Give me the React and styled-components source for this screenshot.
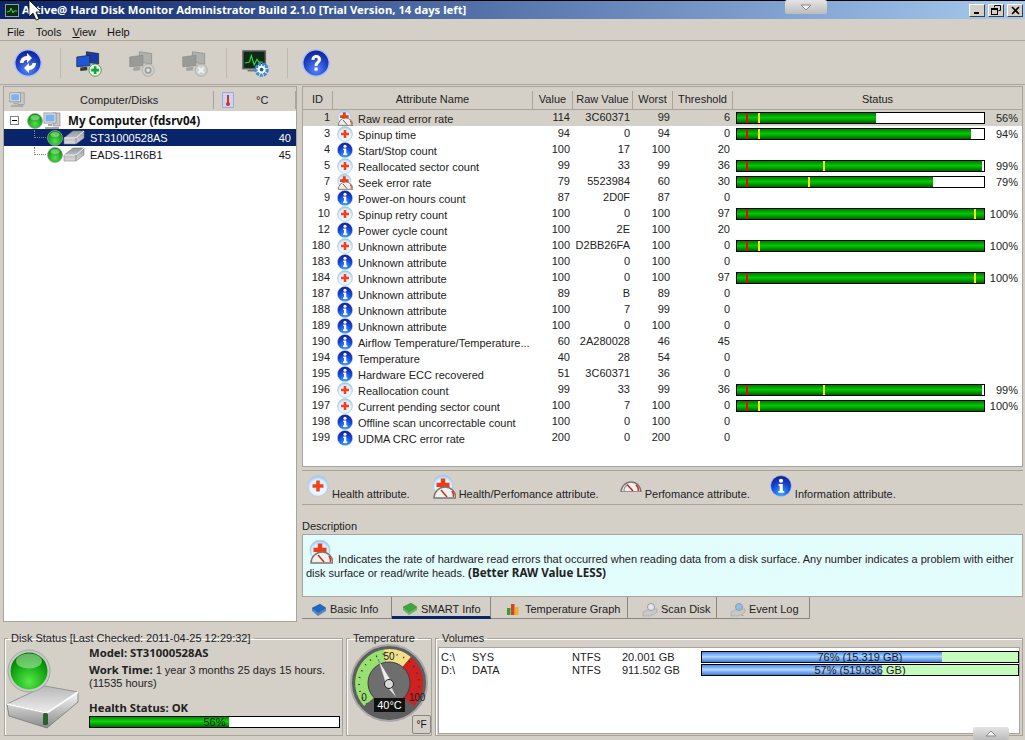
import React from 'react'
import styled, { createGlobalStyle } from 'styled-components'

const GlobalStyle = createGlobalStyle`
  html, body {
    margin: 0;
    padding: 0;
    background: #d4d0c8;
  }
  * { box-sizing: border-box; }
`

const Window = styled.div`
  position: relative;
  width: 1025px;
  height: 740px;
  overflow: hidden;
  display: flex;
  flex-direction: column;
  background: #d4d0c8;
  color: #111;
  font-family: "Liberation Sans", sans-serif;
  font-size: 11px;
  line-height: 16px;
`
const TitleBar = styled.div`
  height: 19px;
  display: flex;
  align-items: center;
  padding: 0 2px 0 5px;
  gap: 3px;
  background: linear-gradient(90deg, #0a246a 0%, #a6caf0 100%);
  border-top: 1px solid #000;
`
const TitleText = styled.div`
  flex: 1;
  color: #fff;
  font-family: "Noto Sans", sans-serif;
  font-weight: bold;
  font-size: 11.3px;
  white-space: nowrap;
`
const WinButton = styled.div`
  width: 16px;
  height: 13px;
  background: #d4d0c8;
  border: 1px solid;
  border-color: #fff #404040 #404040 #fff;
  display: flex;
  align-items: center;
  justify-content: center;
`
const MenuBar = styled.div`
  height: 22px;
  display: flex;
  align-items: center;
  padding-left: 7px;
  gap: 11px;
  font-size: 11px;
  padding-top: 4px;
  border-bottom: 1px solid #aaa69c;
`
const Underlined = styled.span`
  text-decoration: underline;
`
const ToolBar = styled.div`
  height: 44px;
  display: flex;
  align-items: center;
  padding: 1px 0 0 14px;
  border-bottom: 1px solid #aaa69c;
`
const ToolIcon = styled.div`
  width: 28px;
  height: 28px;
  margin-right: ${(p) => p.$gap || 0}px;
  display: flex;
`
const ToolSep = styled.div`
  width: 1px;
  height: 30px;
  background: #bdb9b0;
  margin-right: ${(p) => p.$gap}px;
`
const Main = styled.div`
  height: 537px;
  display: flex;
  padding: 1px 2px 0 3px;
  gap: 5px;
`
const LeftPanel = styled.div`
  width: 294px;
  border: 1px solid #a8a49b;
  background: #fff;
`
const TreeHeader = styled.div`
  height: 24px;
  background: #d4d0c8;
  display: grid;
  grid-template-columns: 210px 1fr;
  align-items: end;
  padding-bottom: 2px;
`
const TreeHeadCell = styled.div`
  height: 18px;
  display: flex;
  align-items: center;
  border-right: 1px solid #a8a49b;
  padding-left: ${(p) => p.$pad || 0}px;
  color: #222;
`
const TreeHeadText = styled.span`
  margin-left: ${(p) => p.$left}px;
`
const TreeRow = styled.div`
  height: 17px;
  display: flex;
  align-items: center;
  padding-left: ${(p) => p.$indent}px;
  padding-right: 5px;
  margin-top: ${(p) => p.$top || 0}px;
  background: ${(p) => (p.$active ? '#0a246a' : 'transparent')};
  color: ${(p) => (p.$active ? '#fff' : '#111')};
`
const TreeLabel = styled.div`
  flex: 1;
  margin-left: ${(p) => (p.$bold ? 7 : 5)}px;
  font-weight: ${(p) => (p.$bold ? 'bold' : 'normal')};
  font-size: ${(p) => (p.$bold ? '11.6px' : '11px')};
  font-family: ${(p) => (p.$bold ? '"Noto Sans", sans-serif' : 'inherit')};
`
const TreeBox = styled.div`
  width: 9px;
  height: 9px;
  border: 1px solid #808080;
  margin-right: 8px;
  display: flex;
  align-items: center;
  justify-content: center;
  &::after {
    content: '';
    width: 5px;
    height: 1px;
    background: #000;
  }
`
const Dotted = styled.div`
  width: 12px;
  height: 8px;
  margin-top: -8px;
  border-left: 1px dotted #808080;
  border-bottom: 1px dotted #808080;
  margin-right: 1px;
`
const RightPanel = styled.div`
  width: 721px;
  display: flex;
  flex-direction: column;
`
const TableFrame = styled.div`
  height: 381px;
  border: 1px solid #a8a49b;
  background: #fff;
`
const COLS = '30px 200px 40px 60px 40px 60px 1fr'
const HeadRow = styled.div`
  height: 23px;
  display: grid;
  grid-template-columns: ${COLS};
  align-items: end;
  background: #d4d0c8;
  border-bottom: 1px solid #a8a49b;
`
const HeadCell = styled.div`
  height: 18px;
  text-align: center;
  border-right: ${(p) => (p.$last ? 'none' : '1px solid #a8a49b')};
  color: #222;
`
const DataRow = styled.div`
  height: 16px;
  display: grid;
  grid-template-columns: ${COLS};
  align-items: center;
  background: ${(p) => (p.$active ? '#d4d0c8' : '#fff')};
  white-space: nowrap;
`
const NumCell = styled.div`
  text-align: right;
  padding: 0 3px 1px 0;
  line-height: 15px;
  color: #222;
`
const NameCell = styled.div`
  display: flex;
  align-items: center;
  gap: 5px;
  padding-left: 4px;
  color: #222;
  overflow: hidden;
  & > svg { flex: none; }
`
const NameText = styled.span`
  padding-top: 2px;
`
const StatusCell = styled.div`
  display: flex;
  align-items: center;
  padding-left: 3px;
`
const Bar = styled.div`
  position: relative;
  width: 249px;
  height: 12px;
  border: 1px solid #000;
  background: #fff;
  overflow: hidden;
`
const BarFill = styled.div`
  height: 100%;
  background: linear-gradient(180deg, #007a00 0%, #00c800 45%, #00a000 70%, #005c00 100%);
`
const Mark = styled.div`
  position: absolute;
  top: 0;
  bottom: 0;
  width: 2px;
  background: ${(p) => p.$color};
`
const Pct = styled.div`
  width: 33px;
  text-align: right;
  color: #222;
`
const Legend = styled.div`
  height: 35px;
  margin-top: 3px;
  display: flex;
  align-items: center;
  padding: 0 0 0 5px;
  border-top: 1px solid #a8a49b;
  border-bottom: 1px solid #a8a49b;
  color: #222;
`
const LegendItem = styled.div`
  display: flex;
  align-items: flex-start;
  margin-right: ${(p) => p.$gap || 0}px;
  gap: 3px;
  & > svg { margin-top: ${(p) => p.$iconTop || 0}px; }
  & > span { margin-top: 12px; line-height: 14px; }
`
const DescLabel = styled.div`
  margin-top: 13px;
  height: 16px;
  color: #222;
`
const DescBox = styled.div`
  height: 63px;
  border: 1px solid #a8a49b;
  background: #e3fdfd;
  padding: 18px 8px 0 3px;
  color: #222;
  line-height: 13px;
`
const DescText = styled.div`
  text-indent: 32px;
`
const DescFlowIcon = styled.span`
  position: absolute;
  margin: -13px 0 0 3px;
`
const DescBold = styled.b`
  display: inline-block;
  text-indent: 0;
  font-family: "Noto Sans", sans-serif;
  font-size: 11.6px;
  line-height: 13px;
`
const Tabs = styled.div`
  display: flex;
  height: 22px;
`
const Tab = styled.div`
  width: ${(p) => p.$w}px;
  display: flex;
  align-items: center;
  gap: ${(p) => p.$gap}px;
  padding: ${(p) => (p.$active ? 4 : 3)}px 0 0 ${(p) => p.$left}px;
  border-right: 1px solid #8a867e;
  border-bottom: ${(p) => (p.$active ? '3px solid #0a246a' : '1px solid #8a867e')};
  color: #222;
`
const Bottom = styled.div`
  flex: 1;
  display: flex;
  gap: 3px;
  padding: 10px 2px 0 4px;
`
const Group = styled.fieldset`
  margin: 0;
  padding: 0;
  min-width: 0;
  width: ${(p) => p.$w}px;
  ${(p) => p.$grow && 'flex: 1;'}
  height: 104px;
  border: 1px solid #a8a49b;
  box-shadow: inset 1px 1px 0 #fff;
  display: flow-root;
`
const GroupTitle = styled.legend`
  padding: 0 3px;
  margin-left: 3px;
  font-size: 11px;
  line-height: 12px;
  color: #222;
`
const StatusBody = styled.div`
  display: flex;
  height: 90px;
`
const BigDisk = styled.div`
  width: 84px;
  flex: none;
`
const StatusInfo = styled.div`
  flex: 1;
  padding-top: 2px;
  color: #222;
  font-size: 11px;
  line-height: 13px;
`
const B = styled.b`
  font-family: "Noto Sans", sans-serif;
  font-size: 11.3px;
`
const InfoLine = styled.div`
  margin-bottom: ${(p) => p.$mb || 0}px;
`
const HealthBar = styled.div`
  position: relative;
  width: 251px;
  height: 12px;
  border: 1px solid #000;
  background: #fff;
  margin-top: 1px;
`
const HealthFill = styled.div`
  height: 100%;
  background: linear-gradient(180deg, #009000 0%, #10d010 45%, #00a800 70%, #006800 100%);
`
const BarText = styled.div`
  position: absolute;
  inset: 0;
  text-align: center;
  line-height: 10px;
  font-size: 11px;
  color: #1a1a1a;
`
const GaugeWrap = styled.div`
  position: relative;
  width: 78px;
  height: 78px;
  margin: 0 0 0 3px;
`
const FButton = styled.div`
  position: absolute;
  right: -3px;
  bottom: -12px;
  width: 19px;
  height: 19px;
  background: #d4d0c8;
  border: 1px solid #8a867e;
  border-radius: 2px;
  text-align: center;
  font-size: 10px;
  line-height: 17px;
`
const VolumeBox = styled.div`
  height: 87px;
  margin: 3px 2px 0;
  background: #fff;
  border: 1px solid #a8a49b;
  padding-top: 1px;
`
const VolumeRow = styled.div`
  height: 13px;
  display: grid;
  grid-template-columns: 31px 100px 50px 79px 318px;
  align-items: center;
  padding-left: 2px;
  color: #222;
  font-size: 11px;
`
const VolumeBar = styled.div`
  position: relative;
  height: 12px;
  border: 1px solid #000;
  background: #c6fbbe;
`
const VolumeFill = styled.div`
  height: 100%;
  background: linear-gradient(180deg, #3f8cf0 0%, #b4d4fa 45%, #7cb0f2 70%, #3a7ee0 100%);
`
const PullTab = styled.div`
  position: absolute;
  top: ${(p) => p.$top}px;
  left: ${(p) => p.$left}px;
  width: ${(p) => p.$w}px;
  height: ${(p) => p.$h}px;
  background: linear-gradient(180deg, #e4e4e4, #bcbcbc);
  border-radius: 2px;
  display: flex;
  align-items: center;
  justify-content: center;
`
const Cursor = styled.svg`
  position: absolute;
  top: 0;
  left: 28px;
`
const HiddenDefs = styled.svg`
  position: absolute;
`

const SharedDefs = () => (
  <HiddenDefs width="0" height="0">
    <defs>
      <radialGradient id="healthGlass" cx="50%" cy="60%" r="60%">
        <stop offset="0%" stopColor="#ffffff" />
        <stop offset="65%" stopColor="#e4f0fa" />
        <stop offset="100%" stopColor="#8cc0ec" />
      </radialGradient>
      <radialGradient id="infoGlass" cx="50%" cy="85%" r="85%">
        <stop offset="0%" stopColor="#38a8ff" />
        <stop offset="55%" stopColor="#1848d8" />
        <stop offset="100%" stopColor="#101c88" />
      </radialGradient>
      <radialGradient id="blueball" cx="50%" cy="75%" r="75%">
        <stop offset="0%" stopColor="#5c88f8" />
        <stop offset="60%" stopColor="#2040c8" />
        <stop offset="100%" stopColor="#101c88" />
      </radialGradient>
      <radialGradient id="ball" cx="50%" cy="70%" r="65%">
        <stop offset="0%" stopColor="#52e052" />
        <stop offset="100%" stopColor="#078a07" />
      </radialGradient>
      <radialGradient id="bigball" cx="50%" cy="78%" r="75%">
        <stop offset="0%" stopColor="#58e848" />
        <stop offset="65%" stopColor="#10a810" />
        <stop offset="100%" stopColor="#067006" />
      </radialGradient>
      <linearGradient id="caseTop" x1="0" y1="0" x2="0" y2="1">
        <stop offset="0%" stopColor="#b8b8b8" />
        <stop offset="100%" stopColor="#eeeeee" />
      </linearGradient>
      <linearGradient id="caseFront" x1="0" y1="0" x2="0" y2="1">
        <stop offset="0%" stopColor="#f8f8f8" />
        <stop offset="100%" stopColor="#8a8a8a" />
      </linearGradient>
      <linearGradient id="tinyDisk" x1="0" y1="0" x2="0" y2="1">
        <stop offset="0%" stopColor="#9298a4" />
        <stop offset="100%" stopColor="#dcdcdc" />
      </linearGradient>
    </defs>
  </HiddenDefs>
)

const HealthIcon = ({ size = 16 }) => (
  <svg width={size} height={size} viewBox="0 0 16 16">
    <circle cx="8" cy="8" r="7.500" fill="url(#healthGlass)" stroke="#a8cdec" strokeWidth=".6" />
    <path d="M6.700 4h2.600v2.700H12v2.600H9.300V12H6.700V9.300H4V6.700h2.700z" fill="#f2421a" />
  </svg>
)
const InfoIcon = ({ size = 16 }) => (
  <svg width={size} height={size} viewBox="0 0 16 16">
    <circle cx="8" cy="8" r="7.600" fill="url(#infoGlass)" stroke="#b0c8f0" strokeWidth=".5" />
    <circle cx="8" cy="4.200" r="1.500" fill="#fff" />
    <path d="M6.200 6.600h3.100v5h1v1.300H6v-1.300h1V7.900h-.8z" fill="#fff" />
  </svg>
)
const PerfIcon = ({ size = 22 }) => (
  <svg width={size} height={size * 0.68} viewBox="0 0 22 15">
    <path d="M1 14a10 10 0 0 1 20 0z" fill="#f2f0ec" stroke="#777" strokeWidth="1.400" />
    <path d="M4 13a7 7 0 0 1 3-6" fill="none" stroke="#999" strokeWidth="1.200" />
    <path d="M16 7a7 7 0 0 1 2.400 6" fill="none" stroke="#d83020" strokeWidth="1.600" />
    <path d="M13 13L7 6.500" stroke="#b03020" strokeWidth="1.500" />
  </svg>
)
const HealthPerfIcon = ({ size = 16 }) => (
  <svg width={size} height={size} viewBox="0 0 24 24">
    <circle cx="11" cy="10" r="10" fill="url(#healthGlass)" stroke="#a8cdec" strokeWidth=".8" />
    <path d="M8.800 3.500h4.400v4.300h4.300v4.200h-4.300v3H8.800v-3H4.500V7.800h4.300z" fill="#f03a14" />
    <path d="M2 23a11 11 0 0 1 22 0z" fill="#f2f0ec" stroke="#777" strokeWidth="1.400" />
    <path d="M15 22L9 15" stroke="#b03020" strokeWidth="1.400" />
    <path d="M20 16a8 8 0 0 1 1.500 6" fill="none" stroke="#d83020" strokeWidth="1.600" />
  </svg>
)
const rowIcons = { h: HealthIcon, i: InfoIcon, p: HealthPerfIcon }

const GreenBall = ({ size = 16 }) => (
  <svg width={size} height={size} viewBox="0 0 16 16">
    <circle cx="8" cy="8" r="7.500" fill="url(#ball)" stroke="#9aa89a" strokeWidth=".8" />
    <ellipse cx="8" cy="4.500" rx="4.500" ry="2.500" fill="#a0e8a0" opacity=".6" />
  </svg>
)
const DiskIcon = () => (
  <svg width="22" height="16" viewBox="0 0 22 16">
    <path d="M1 8L10 1h11v7l-8 6H1z" fill="url(#tinyDisk)" stroke="#808080" strokeWidth=".6" />
    <path d="M1 8h12l8-7" fill="none" stroke="#f0f0f0" strokeWidth="1" />
    <path d="M13 8v6" stroke="#808080" strokeWidth=".8" />
  </svg>
)
const ComputerIcon = ({ size = 18 }) => (
  <svg width={size} height={size} viewBox="0 0 18 18">
    <rect x="10" y="1" width="7" height="13" fill="#c8c8c8" stroke="#808080" strokeWidth=".6" />
    <rect x="1" y="1" width="12" height="10" fill="#e8eef8" stroke="#808080" strokeWidth=".8" />
    <rect x="2.500" y="2.500" width="9" height="7" fill="#7fb2ec" />
    <path d="M5 12h4v2H5zM2 15h14v2H2z" fill="#a8a8a8" />
  </svg>
)

const RefreshIcon = () => (
  <svg width="28" height="28" viewBox="0 0 28 28">
    <circle cx="14" cy="14" r="13.200" fill="url(#blueball)" stroke="#a8c4f0" strokeWidth="1.400" />
    <path d="M6 14c0-4 3-7 7-7V4l5 5-5 5v-3c-2 0-3.500 1.300-3.500 3z" fill="#fff" />
    <path d="M22 14c0 4-3 7-7 7v3l-5-5 5-5v3c2 0 3.500-1.300 3.500-3z" fill="#fff" />
  </svg>
)
const MonitorsIcon = ({ gray, badge }) => {
  const front = gray ? '#9a9a96' : '#1e56d8'
  const back = gray ? '#b0b0ac' : '#1a3aa8'
  return (
    <svg width="32" height="30" viewBox="0 0 32 30">
      <path d="M13 1l14 2v12l-14-2z" fill={back} stroke={gray ? '#8a8a86' : '#222'} strokeWidth=".8" />
      <path d="M2 7l15-2v12L2 18z" fill={front} stroke={gray ? '#8a8a86' : '#222'} strokeWidth=".8" />
      <path d="M6 19l8-1v4l-8 1z" fill={gray ? '#a4a4a0' : '#303848'} />
      <circle cx="23" cy="22" r="7" fill={badge === 'add' ? '#e8f4e8' : '#cfcfcb'} stroke={gray ? '#a8a8a4' : '#409040'} />
      {badge === 'add' && <path d="M21.500 17.500h3v3h3v3h-3v3h-3v-3h-3v-3h3z" fill="#18a038" />}
      {badge === 'gear' && <circle cx="23" cy="22" r="3" fill="#e4e4e0" stroke="#a0a09c" strokeWidth="2" />}
      {badge === 'x' && <path d="M20 19l6 6M26 19l-6 6" stroke="#f0f0ec" strokeWidth="2.400" />}
    </svg>
  )
}
const ScreenGearIcon = () => (
  <svg width="30" height="30" viewBox="0 0 30 30">
    <rect x="1" y="1" width="24" height="19" fill="#0c2a14" stroke="#666" strokeWidth="1.600" />
    <path d="M3 14l5-1 2-7 3 10 3-6 2 3h4" fill="none" stroke="#32d850" strokeWidth="1.200" />
    <path d="M6 21h12v2H6z" fill="#777" />
    <circle cx="21" cy="21" r="6" fill="#fff" stroke="#3e8cd8" strokeWidth="3.500" strokeDasharray="3 1" />
    <circle cx="21" cy="21" r="2" fill="#1a5aa8" />
  </svg>
)
const HelpIcon = () => (
  <svg width="28" height="28" viewBox="0 0 28 28">
    <circle cx="14" cy="14" r="13.200" fill="url(#blueball)" stroke="#a8c4f0" strokeWidth="1.400" />
    <path d="M9.500 11c0-3.200 2.200-5 4.800-5s4.700 1.800 4.700 4.400c0 3.300-3.400 3.500-3.400 6.600h-3c0-4.200 3.200-4.600 3.200-6.500 0-1.100-.6-1.800-1.600-1.800s-1.700.8-1.700 2.300z" fill="#fff" />
    <rect x="12.500" y="18.500" width="3.100" height="3.100" fill="#fff" />
  </svg>
)
const BookIcon = ({ color }) => (
  <svg width="16" height="13" viewBox="0 0 16 13">
    <path d="M1 5l8-4 6 4-8 5z" fill={color} stroke="#204020" strokeWidth=".3" />
    <path d="M1 5v3l6 5 8-5V5l-8 5z" fill={color} opacity=".7" />
  </svg>
)
const ChartIcon = () => (
  <svg width="14" height="14" viewBox="0 0 14 14">
    <rect x="1" y="6" width="3.500" height="7" fill="#30a030" />
    <rect x="5" y="2" width="3.500" height="11" fill="#d84020" />
    <rect x="9" y="5" width="3.500" height="8" fill="#f0b020" />
  </svg>
)
const SearchDiskIcon = ({ log }) => (
  <svg width="16" height="15" viewBox="0 0 16 15">
    <path d="M1 10l6-3h8v3l-6 4H1z" fill="#c8c8c8" stroke="#999" strokeWidth=".5" />
    <circle cx="9" cy="5" r="3.500" fill={log ? '#8ac0f0' : '#e4e8ec'} stroke="#9a9a9a" />
    {log && <path d="M11 12l3 2-2 0z" fill="#f08020" />}
  </svg>
)
const Thermometer = () => (
  <svg width="12" height="16" viewBox="0 0 12 16">
    <rect x=".5" y=".5" width="11" height="15" fill="#cfd4ec" stroke="#a0a8d8" />
    <rect x="5" y="3" width="2" height="8" fill="#d03030" />
    <circle cx="6" cy="12" r="2" fill="#d03030" />
  </svg>
)
const LargeDisk = () => (
  <svg width="80" height="90" viewBox="0 0 80 90">
    <path d="M2 60L40 42l33 6-31 21z" fill="url(#caseTop)" stroke="#888" strokeWidth=".8" />
    <path d="M2 60l40 9 31-21v10L42 84 4 72z" fill="url(#caseFront)" stroke="#777" strokeWidth=".8" />
    <path d="M2 60l40 9 31-21" fill="none" stroke="#fff" strokeWidth="1.600" />
    <rect x="38" y="69" width="5" height="12" rx="1.500" fill="#2e5e30" />
    <circle cx="24" cy="27" r="21" fill="#c4ccc4" stroke="#a0a8a0" />
    <circle cx="24" cy="27" r="18.500" fill="url(#bigball)" />
    <ellipse cx="24" cy="17" rx="13" ry="7.500" fill="#b4ecb0" opacity=".55" />
  </svg>
)
const Gauge = () => (
  <svg width="78" height="78" viewBox="0 0 78 78">
    <circle cx="39" cy="39" r="38" fill="#5e5e5e" stroke="#a8a8a8" strokeWidth="2" />
    <path d="M14 62A34 34 0 0 1 34 5.500L36 22A17 17 0 0 0 26 52z" fill="#98e070" />
    <path d="M34 5.500A34 34 0 0 1 61 13L50 26A17 17 0 0 0 36 22z" fill="#f0e088" />
    <path d="M61 13A34 34 0 0 1 64 62L52 52A17 17 0 0 0 50 26z" fill="#d02020" />
    <path d="M17 60A30 30 0 1 1 61 60" fill="none" stroke="#333" strokeWidth="1.800" strokeDasharray="1 6" />
    <circle cx="39" cy="39" r="21" fill="#6e6e6e" stroke="#3e3e3e" />
    <path d="M28 15L42 38L36 41z" fill="#ececec" stroke="#666" strokeWidth=".5" />
    <path d="M41 42l5 11-7-8z" fill="#e0e0e0" />
    <circle cx="39" cy="40" r="4.500" fill="#d8d8d8" stroke="#222" />
    <text x="39" y="16" textAnchor="middle" fontSize="10" fontFamily="Liberation Sans" fill="#222">50</text>
    <text x="14" y="57" textAnchor="middle" fontSize="10" fontFamily="Liberation Sans" fill="#222">0</text>
    <text x="67" y="57" textAnchor="middle" fontSize="10" fontFamily="Liberation Sans" fill="#222">100</text>
    <rect x="24" y="54" width="31" height="14" fill="#111" />
    <text x="39.500" y="65" textAnchor="middle" fontSize="11" fontFamily="Liberation Sans" fill="#fff">40°C</text>
  </svg>
)

const rows = [
  { id: 1, name: 'Raw read error rate', value: 114, raw: '3C60371', worst: 99, thr: 6, icon: 'p', pct: 56, fill: 139, mark: 21, active: true },
  { id: 3, name: 'Spinup time', value: 94, raw: '0', worst: 94, thr: 0, icon: 'h', pct: 94, fill: 234, mark: 21 },
  { id: 4, name: 'Start/Stop count', value: 100, raw: '17', worst: 100, thr: 20, icon: 'i' },
  { id: 5, name: 'Reallocated sector count', value: 99, raw: '33', worst: 99, thr: 36, icon: 'h', pct: 99, fill: 245, mark: 86 },
  { id: 7, name: 'Seek error rate', value: 79, raw: '5523984', worst: 60, thr: 30, icon: 'p', pct: 79, fill: 196, mark: 71 },
  { id: 9, name: 'Power-on hours count', value: 87, raw: '2D0F', worst: 87, thr: 0, icon: 'i' },
  { id: 10, name: 'Spinup retry count', value: 100, raw: '0', worst: 100, thr: 97, icon: 'h', pct: 100, fill: 247, mark: 237 },
  { id: 12, name: 'Power cycle count', value: 100, raw: '2E', worst: 100, thr: 20, icon: 'i' },
  { id: 180, name: 'Unknown attribute', value: 100, raw: 'D2BB26FA', worst: 100, thr: 0, icon: 'h', pct: 100, fill: 247, mark: 21 },
  { id: 183, name: 'Unknown attribute', value: 100, raw: '0', worst: 100, thr: 0, icon: 'i' },
  { id: 184, name: 'Unknown attribute', value: 100, raw: '0', worst: 100, thr: 97, icon: 'h', pct: 100, fill: 247, mark: 237 },
  { id: 187, name: 'Unknown attribute', value: 89, raw: 'B', worst: 89, thr: 0, icon: 'i' },
  { id: 188, name: 'Unknown attribute', value: 100, raw: '7', worst: 99, thr: 0, icon: 'i' },
  { id: 189, name: 'Unknown attribute', value: 100, raw: '0', worst: 100, thr: 0, icon: 'i' },
  { id: 190, name: 'Airflow Temperature/Temperature...', value: 60, raw: '2A280028', worst: 46, thr: 45, icon: 'i' },
  { id: 194, name: 'Temperature', value: 40, raw: '28', worst: 54, thr: 0, icon: 'i' },
  { id: 195, name: 'Hardware ECC recovered', value: 51, raw: '3C60371', worst: 36, thr: 0, icon: 'i' },
  { id: 196, name: 'Reallocation count', value: 99, raw: '33', worst: 99, thr: 36, icon: 'h', pct: 99, fill: 245, mark: 86 },
  { id: 197, name: 'Current pending sector count', value: 100, raw: '7', worst: 100, thr: 0, icon: 'h', pct: 100, fill: 247, mark: 21 },
  { id: 198, name: 'Offline scan uncorrectable count', value: 100, raw: '0', worst: 100, thr: 0, icon: 'i' },
  { id: 199, name: 'UDMA CRC error rate', value: 200, raw: '0', worst: 200, thr: 0, icon: 'i' },
]

function AttributeRow({ row }) {
  const Icon = rowIcons[row.icon]
  return (
    <DataRow $active={row.active}>
      <NumCell>{row.id}</NumCell>
      <NameCell><Icon /><NameText>{row.name}</NameText></NameCell>
      <NumCell>{row.value}</NumCell>
      <NumCell>{row.raw}</NumCell>
      <NumCell>{row.worst}</NumCell>
      <NumCell>{row.thr}</NumCell>
      <StatusCell>
        {row.pct !== undefined && (
          <>
            <Bar>
              <BarFill style={{ width: row.fill }} />
              <Mark $color="#f00000" style={{ left: 9 }} />
              <Mark $color="#f8f000" style={{ left: row.mark }} />
            </Bar>
            <Pct>{row.pct}%</Pct>
          </>
        )}
      </StatusCell>
    </DataRow>
  )
}

export default function App() {
  return (
    <Window>
      <GlobalStyle />
      <SharedDefs />
      <TitleBar>
        <svg width="14" height="13" viewBox="0 0 14 13">
          <rect x=".5" y=".5" width="13" height="12" fill="#0c2a14" stroke="#999" />
          <path d="M2 8l3-1 1-3 2 5 1-2h3" fill="none" stroke="#32d850" />
        </svg>
        <TitleText>Active@ Hard Disk Monitor Administrator Build 2.1.0 [Trial Version, 14 days left]</TitleText>
        <WinButton>
          <svg width="8" height="8" viewBox="0 0 8 8"><rect x="1" y="6" width="5" height="2" fill="#000" /></svg>
        </WinButton>
        <WinButton>
          <svg width="10" height="10" viewBox="0 0 10 10" fill="none" stroke="#000">
            <path d="M3.500 2.500v-2h6v5h-2" />
            <rect x=".5" y="3.500" width="6" height="6" />
            <path d="M1 4.500h5" />
          </svg>
        </WinButton>
        <WinButton>
          <svg width="9" height="9" viewBox="0 0 9 9"><path d="M1 1l7 7M8 1L1 8" stroke="#000" strokeWidth="1.600" /></svg>
        </WinButton>
      </TitleBar>

      <MenuBar>
        <span>File</span>
        <span>Tools</span>
        <span><Underlined>V</Underlined>iew</span>
        <span>Help</span>
      </MenuBar>

      <ToolBar>
        <ToolIcon $gap={18}><RefreshIcon /></ToolIcon>
        <ToolSep $gap={14} />
        <ToolIcon $gap={25}><MonitorsIcon badge="add" /></ToolIcon>
        <ToolIcon $gap={25}><MonitorsIcon gray badge="gear" /></ToolIcon>
        <ToolIcon $gap={17}><MonitorsIcon gray badge="x" /></ToolIcon>
        <ToolSep $gap={15} />
        <ToolIcon $gap={17}><ScreenGearIcon /></ToolIcon>
        <ToolSep $gap={14} />
        <ToolIcon><HelpIcon /></ToolIcon>
      </ToolBar>

      <Main>
        <LeftPanel>
          <TreeHeader>
            <TreeHeadCell $pad={5}>
              <ComputerIcon size={16} />
              <TreeHeadText $left={55}>Computer/Disks</TreeHeadText>
            </TreeHeadCell>
            <TreeHeadCell $pad={8}>
              <Thermometer />
              <TreeHeadText $left={22}>°C</TreeHeadText>
            </TreeHeadCell>
          </TreeHeader>
          <TreeRow $indent={6} $top={1}>
            <TreeBox />
            <GreenBall />
            <ComputerIcon />
            <TreeLabel $bold>My Computer (fdsrv04)</TreeLabel>
          </TreeRow>
          <TreeRow $indent={30} $active>
            <Dotted />
            <GreenBall />
            <DiskIcon />
            <TreeLabel>ST31000528AS</TreeLabel>
            <span>40</span>
          </TreeRow>
          <TreeRow $indent={30}>
            <Dotted />
            <GreenBall />
            <DiskIcon />
            <TreeLabel>EADS-11R6B1</TreeLabel>
            <span>45</span>
          </TreeRow>
        </LeftPanel>

        <RightPanel>
          <TableFrame>
            <HeadRow>
              <HeadCell>ID</HeadCell>
              <HeadCell>Attribute Name</HeadCell>
              <HeadCell>Value</HeadCell>
              <HeadCell>Raw Value</HeadCell>
              <HeadCell>Worst</HeadCell>
              <HeadCell>Threshold</HeadCell>
              <HeadCell $last>Status</HeadCell>
            </HeadRow>
            {rows.map((row) => <AttributeRow key={row.id} row={row} />)}
          </TableFrame>

          <Legend>
            <LegendItem $gap={22}><HealthIcon size={22} /><span>Health attribute.</span></LegendItem>
            <LegendItem $gap={21}><HealthPerfIcon size={24} /><span>Health/Perfomance attribute.</span></LegendItem>
            <LegendItem $gap={20} $iconTop={3}><PerfIcon size={22} /><span>Perfomance attribute.</span></LegendItem>
            <LegendItem><InfoIcon size={22} /><span>Information attribute.</span></LegendItem>
          </Legend>

          <DescLabel>Description</DescLabel>
          <DescBox>
            <DescFlowIcon><HealthPerfIcon size={24} /></DescFlowIcon>
            <DescText>
              Indicates the rate of hardware read errors that occurred when reading data from a disk surface. Any number indicates a problem with either disk surface or read/write heads. <DescBold>(Better RAW Value LESS)</DescBold>
            </DescText>
          </DescBox>

          <Tabs>
            <Tab $w={90} $left={9} $gap={3}><BookIcon color="#1c68c8" />Basic Info</Tab>
            <Tab $w={99} $left={10} $gap={3} $active><BookIcon color="#3aa83a" />SMART Info</Tab>
            <Tab $w={137} $left={15} $gap={5}><ChartIcon />Temperature Graph</Tab>
            <Tab $w={89} $left={14} $gap={3}><SearchDiskIcon />Scan Disk</Tab>
            <Tab $w={93} $left={13} $gap={3}><SearchDiskIcon log />Event Log</Tab>
          </Tabs>
        </RightPanel>
      </Main>

      <Bottom>
        <Group $w={339}>
          <GroupTitle>Disk Status [Last Checked: 2011-04-25 12:29:32]</GroupTitle>
          <StatusBody>
            <BigDisk><LargeDisk /></BigDisk>
            <StatusInfo>
              <InfoLine $mb={3}><B>Model: ST31000528AS</B></InfoLine>
              <InfoLine><B>Work Time:</B> 1 year 3 months 25 days 15 hours.</InfoLine>
              <InfoLine $mb={11}>(11535 hours)</InfoLine>
              <InfoLine><B>Health Status: OK</B></InfoLine>
              <HealthBar>
                <HealthFill style={{ width: '56%' }} />
                <BarText>56%</BarText>
              </HealthBar>
            </StatusInfo>
          </StatusBody>
        </Group>
        <Group $w={86}>
          <GroupTitle>Temperature</GroupTitle>
          <GaugeWrap>
            <Gauge />
            <FButton>°F</FButton>
          </GaugeWrap>
        </Group>
        <Group $grow>
          <GroupTitle>Volumes</GroupTitle>
          <VolumeBox>
            <VolumeRow>
              <span>C:\</span><span>SYS</span><span>NTFS</span><span>20.001 GB</span>
              <VolumeBar>
                <VolumeFill style={{ width: '76%' }} />
                <BarText>76% (15.319 GB)</BarText>
              </VolumeBar>
            </VolumeRow>
            <VolumeRow>
              <span>D:\</span><span>DATA</span><span>NTFS</span><span>911.502 GB</span>
              <VolumeBar>
                <VolumeFill style={{ width: '57%' }} />
                <BarText>57% (519.636 GB)</BarText>
              </VolumeBar>
            </VolumeRow>
          </VolumeBox>
        </Group>
      </Bottom>

      <PullTab $top={0} $left={785} $w={42} $h={14}>
        <svg width="12" height="7" viewBox="0 0 12 7"><path d="M1 1h10L6 6z" fill="#f2f2f2" stroke="#888" /></svg>
      </PullTab>
      <PullTab $top={727} $left={973} $w={36} $h={13}>
        <svg width="12" height="7" viewBox="0 0 12 7"><path d="M1 6h10L6 1z" fill="#f2f2f2" stroke="#888" /></svg>
      </PullTab>
      <Cursor width="14" height="22" viewBox="0 0 14 22">
        <path d="M1 0v17l4-4 3 7 3-1-3-7h5z" fill="#fff" stroke="#000" strokeWidth=".8" />
      </Cursor>
    </Window>
  )
}
